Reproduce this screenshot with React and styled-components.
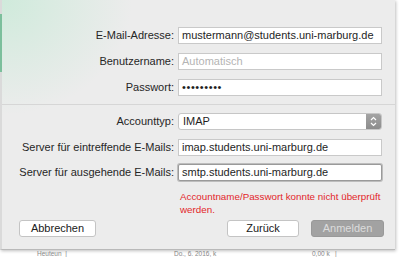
import React from 'react';
import styled, { createGlobalStyle } from 'styled-components';

const GlobalStyle = createGlobalStyle`
  html, body {
    margin: 0;
    padding: 0;
    background: #ffffff;
  }
  body {
    font-family: "Liberation Sans", Arial, sans-serif;
  }
`;

const Screen = styled.div`
  width: 400px;
  height: 257px;
  overflow: hidden;
  background: #ffffff;
  display: flex;
  flex-direction: column;
`;

const Sheet = styled.div`
  width: 395px;
  height: 250px;
  flex-shrink: 0;
  box-sizing: border-box;
  background:
    radial-gradient(ellipse 130px 115px at 0 0, rgba(200, 234, 215, 0.8), rgba(236, 236, 236, 0) 100%),
    #ececec;
  border-left: 2px solid #dadada;
  border-bottom: 1px solid #b9b9b9;
  box-shadow: 1px 1px 3px rgba(0, 0, 0, 0.25);
  display: flex;
  flex-direction: column;
  position: relative;
`;

const EdgeMark = styled.div`
  position: absolute;
  left: -2px;
  top: 14px;
  width: 2px;
  height: 58px;
  background: #7cbf9c;
`;

const Form = styled.div`
  display: grid;
  grid-template-columns: 172px 204px;
  grid-auto-rows: 17px;
  column-gap: 4px;
  row-gap: ${p => p.$gap}px;
  margin-top: ${p => p.$top}px;
`;

const Label = styled.label`
  font-size: 11px;
  color: #262626;
  text-align: right;
  line-height: 17px;
  white-space: nowrap;
`;

const Field = styled.div`
  box-sizing: border-box;
  height: 17px;
  background: #ffffff;
  border: 1px solid ${p => (p.$focused ? '#9a9a9a' : '#c9c9c9')};
  box-shadow: ${p => (p.$focused ? '0 0 0 1px #bdbdbd' : 'none')};
  border-radius: ${p => (p.$focused ? '2px' : '0')};
  padding: 0 3px;
  font-size: 11px;
  line-height: 15px;
  color: ${p => (p.$placeholder ? '#b4b4b4' : '#1e1e1e')};
  letter-spacing: ${p => (p.$secret ? '0.6px' : '0')};
  white-space: nowrap;
  overflow: hidden;
`;

const Select = styled.div`
  box-sizing: border-box;
  height: 17px;
  background: #ffffff;
  border: 1px solid #c6c6c6;
  border-radius: 3px;
  display: flex;
  align-items: stretch;
  overflow: hidden;
`;

const SelectValue = styled.span`
  flex: 1;
  padding: 0 4px;
  font-size: 11px;
  line-height: 15px;
  color: #1e1e1e;
`;

const Stepper = styled.span`
  width: 15px;
  background: linear-gradient(#a4a4a4, #8c8c8c);
  display: flex;
  align-items: center;
  justify-content: center;
`;

const Divider = styled.div`
  height: 1px;
  background: #d6d6d6;
  margin-top: 8px;
`;

const ErrorText = styled.div`
  margin: 9px 0 0 178px;
  width: 205px;
  font-size: 9.8px;
  line-height: 13px;
  color: #e3262a;
`;

const ButtonRow = styled.div`
  display: flex;
  align-items: center;
  margin-top: 4px;
  padding-left: 17px;
`;

const Button = styled.div`
  box-sizing: border-box;
  width: ${p => p.$w}px;
  height: 17px;
  margin-left: ${p => p.$push || 0}px;
  border-radius: 3px;
  border: 1px solid ${p => (p.$disabled ? '#999999' : '#c4c4c4')};
  background: ${p => (p.$disabled ? '#a2a2a2' : '#ffffff')};
  color: ${p => (p.$disabled ? '#dcdcdc' : '#202020')};
  font-size: 11px;
  line-height: 15px;
  text-align: center;
`;

const Behind = styled.div`
  height: 7px;
  display: flex;
  align-items: center;
  font-size: 6.5px;
  line-height: 7px;
  color: #8a8a8a;
  overflow: hidden;
  white-space: nowrap;
`;

const BehindCell = styled.span`
  width: ${p => p.$w}px;
  padding-left: ${p => p.$pad || 0}px;
`;

function Chevrons() {
  return (
    <svg width="7" height="11" viewBox="0 0 7 11">
      <path d="M1 4 L3.5 1.5 L6 4 M1 7 L3.5 9.5 L6 7" fill="none" stroke="#ffffff" strokeWidth="1.2" />
    </svg>
  );
}

export default function App() {
  return (
    <>
      <GlobalStyle />
      <Screen>
        <Sheet>
          <EdgeMark />
          <Form $top={27} $gap={9}>
            <Label>E-Mail-Adresse:</Label>
            <Field>mustermann@students.uni-marburg.de</Field>
            <Label>Benutzername:</Label>
            <Field $placeholder>Automatisch</Field>
            <Label>Passwort:</Label>
            <Field $secret>•••••••••</Field>
          </Form>
          <Divider />
          <Form $top={8} $gap={8.5}>
            <Label>Accounttyp:</Label>
            <Select>
              <SelectValue>IMAP</SelectValue>
              <Stepper><Chevrons /></Stepper>
            </Select>
            <Label>Server für eintreffende E-Mails:</Label>
            <Field>imap.students.uni-marburg.de</Field>
            <Label>Server für ausgehende E-Mails:</Label>
            <Field $focused>smtp.students.uni-marburg.de</Field>
          </Form>
          <ErrorText>Accountname/Passwort konnte nicht überprüft werden.</ErrorText>
          <ButtonRow>
            <Button $w={77}>Abbrechen</Button>
            <Button $w={72} $push={131}>Zurück</Button>
            <Button $w={73} $push={12} $disabled>Anmelden</Button>
          </ButtonRow>
        </Sheet>
        <Behind>
          <BehindCell $w={137} $pad={37}>Heuteun&nbsp;&nbsp;|</BehindCell>
          <BehindCell $w={138}>Do., 6. 2016, k</BehindCell>
          <BehindCell $w={60}>0,00 k&nbsp;&nbsp;&nbsp;|</BehindCell>
        </Behind>
      </Screen>
    </>
  );
}
